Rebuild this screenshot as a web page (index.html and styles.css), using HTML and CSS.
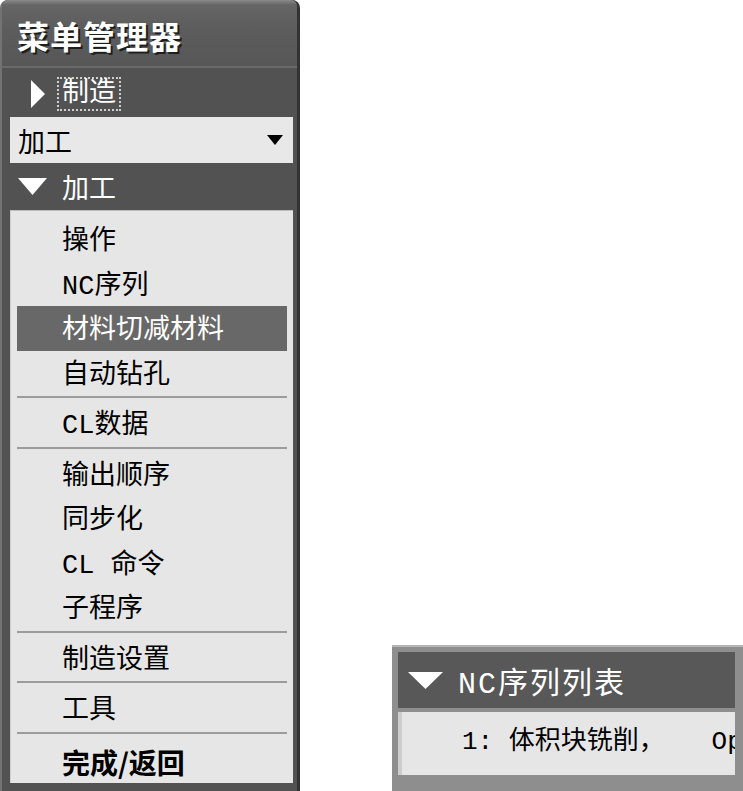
FILE: index.html
```
<!DOCTYPE html>
<html lang="zh-CN">
<head>
    <meta charset="UTF-8">
    <title>菜单管理器</title>
    <link rel="stylesheet" href="styles.css">
</head>
<body>

    <div class="menu-panel">
        <div class="title">菜单管理器</div>

        <div class="panel-body">
            <!-- 上级菜单 -->
            <div class="group-row">
                <svg class="tri-right" width="14" height="28" viewBox="0 0 14 28"><polygon points="0,0 14,14 0,28" fill="#fff"/></svg>
                <span class="focus-box">制造</span>
            </div>

            <div class="select-box">
                <span>加工</span>
                <svg width="16" height="10" viewBox="0 0 16 10"><polygon points="0,0 16,0 8,10" fill="#000"/></svg>
            </div>

            <div class="group-head">
                <svg width="29" height="17" viewBox="0 0 29 17"><polygon points="0,0 29,0 14.5,17" fill="#fff"/></svg>
                <span>加工</span>
            </div>

            <!-- 菜单项 -->
            <div class="menu-list">
                <div class="item">操作</div>
                <div class="item">NC序列</div>
                <div class="item active">材料切减材料</div>
                <div class="item">自动钻孔</div>
                <div class="sep"></div>
                <div class="item">CL数据</div>
                <div class="sep"></div>
                <div class="item">输出顺序</div>
                <div class="item">同步化</div>
                <div class="item">CL 命令</div>
                <div class="item">子程序</div>
                <div class="sep"></div>
                <div class="item">制造设置</div>
                <div class="sep"></div>
                <div class="item">工具</div>
                <div class="sep"></div>
                <div class="item done">完成/返回</div>
            </div>
        </div>
    </div>

    <div class="seq-panel">
        <div class="seq-head">
            <svg width="35" height="17" viewBox="0 0 35 17"><polygon points="0,0 35,0 17.5,17" fill="#fff"/></svg>
            <span>NC序列列表</span>
        </div>
        <div class="seq-body">
            <div class="seq-item">1: 体积块铣削，   Operation</div>
        </div>
    </div>

</body>
</html>
```

FILE: styles.css
```
body {
    margin: 0;
    height: 791px;
    overflow: hidden;
    background-color: #fff;
    display: flex;
    align-items: flex-end;
    gap: 92px;
    font-family: "Liberation Mono", "Noto Sans CJK SC", monospace;
}

.menu-panel {
    width: 300px;
    height: 791px;
    flex-shrink: 0;
    box-sizing: border-box;
    background-color: #525252;
    border-left: 2px solid #737373;
    border-right: 3px solid #333;
    border-radius: 8px 8px 0 0;
    display: flex;
    flex-direction: column;
}

.title {
    height: 68px;
    box-sizing: border-box;
    padding: 17px 0 0 15px;
    background: linear-gradient(#8a8a8a 0, #656565 5px, #5c5c5c 30px, #575757);
    border-bottom: 2px solid #6a6a6a;
    border-radius: 6px 6px 0 0;
    color: #fff;
    font-family: "Noto Sans CJK SC", sans-serif;
    font-size: 32px;
    font-weight: bold;
    line-height: 36px;
    letter-spacing: 1px;
    text-shadow: 2px 2px 0 #1e1e1e;
}

.panel-body {
    flex: 1;
    padding: 0 4px 8px 8px;
    display: flex;
    flex-direction: column;
}

.group-row {
    height: 47px;
    box-sizing: border-box;
    padding: 4px 0 0 21px;
    display: flex;
    align-items: center;
    color: #fff;
    font-size: 27px;
}

.tri-right {
    margin-right: 12px;
}

.focus-box {
    border: 2px dotted #cfcfcf;
    padding: 0 3px;
    line-height: 30px;
}

.select-box {
    height: 46px;
    margin-top: 2px;
    background-color: #e8e8e8;
    display: flex;
    align-items: center;
    justify-content: space-between;
    padding: 0 10px 0 8px;
    font-size: 27px;
    color: #000;
}

.group-head {
    height: 47px;
    display: flex;
    align-items: center;
    gap: 15px;
    padding-left: 8px;
    color: #fff;
    font-size: 27px;
}

.menu-list {
    flex: 1;
    background-color: #e6e6e6;
    border-top: 1px solid #bdbdbd;
    border-left: 1px solid #cfcfcf;
    padding: 6px 6px 0 6px;
    overflow: hidden;
}

.item {
    height: 44.5px;
    box-sizing: border-box;
    padding: 6px 0 0 45px;
    line-height: 38.5px;
    font-size: 27px;
    color: #000;
    white-space: pre;
}

.item.active {
    background-color: #686868;
    color: #fff;
}

.item.done {
    font-weight: bold;
    font-family: "Noto Sans CJK SC", sans-serif;
    font-size: 28px;
}

.sep {
    height: 5px;
    box-sizing: border-box;
    border-top: 2px solid #9c9c9c;
    margin-top: 1px;
}

.seq-panel {
    width: 351px;
    height: 146px;
    flex-shrink: 0;
    box-sizing: border-box;
    background-color: #8e8e8e;
    border-top: 2px solid #b5b5b5;
    padding: 5px 8px 16px 6px;
    display: flex;
    flex-direction: column;
}

.seq-head {
    height: 56px;
    background-color: #585858;
    display: flex;
    align-items: center;
    gap: 15px;
    padding-left: 10px;
    color: #fff;
    font-size: 30px;
    letter-spacing: 2px;
}

.seq-body {
    flex: 1;
    margin-top: 4px;
    background-color: #e6e6e6;
    border-left: 4px solid #cdcdcd;
    overflow: hidden;
}

.seq-item {
    line-height: 60px;
    padding-left: 60px;
    font-size: 26px;
    color: #000;
    white-space: pre;
}
```
